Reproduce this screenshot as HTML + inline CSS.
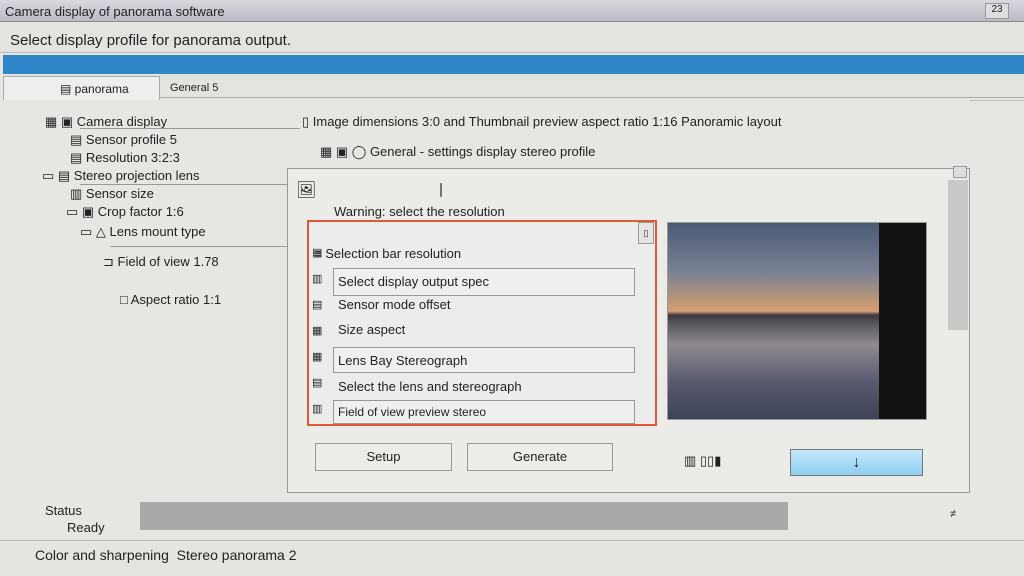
<!DOCTYPE html><html><head><style>
body{margin:0;width:1024px;height:576px;overflow:hidden;background:#e6e6e3;font-family:"Liberation Sans",sans-serif;position:relative;color:#222}
div{position:absolute;box-sizing:border-box}
.t{font-size:13px;white-space:nowrap}
.bx{border:1px solid #999}
</style></head><body>
<div style="left:0;top:0;width:1024px;height:22px;background:linear-gradient(#d8d9df,#b9bbc6);border-bottom:1px solid #888"></div>
<div class="t" style="left:5px;top:4px;font-size:13px">Camera display of panorama software</div>
<div class="bx" style="left:985px;top:3px;width:24px;height:16px;background:#ddd;font-size:10px;text-align:center">23</div>
<div style="left:0;top:23px;width:1024px;height:30px;background:#e4e3e0;border-bottom:1px solid #bbb"></div>
<div class="t" style="left:10px;top:32px;font-size:15px">Select display profile for panorama output.</div>
<div style="left:3px;top:55px;width:1021px;height:19px;background:#2f86c8"></div>
<div style="left:3px;top:74px;width:1021px;height:24px;background:#e3e3e0;border-bottom:1px solid #aaa"></div>
<div style="left:3px;top:76px;width:157px;height:24px;background:#eeeeec;border:1px solid #aaa;border-bottom:none"></div>
<div class="t" style="left:60px;top:82px;font-size:12px">▤ panorama</div>
<div class="t" style="left:170px;top:82px;font-size:11px">General 5</div>
<!-- left tree -->
<div class="t" style="left:45px;top:114px">▦ ▣ Camera display</div>
<div style="left:80px;top:128px;width:220px;border-top:1px solid #999"></div>
<div class="t" style="left:70px;top:132px">▤ Sensor profile 5</div>
<div class="t" style="left:70px;top:150px">▤ Resolution 3:2:3</div>
<div class="t" style="left:42px;top:168px">▭ ▤ Stereo projection lens</div>
<div style="left:80px;top:184px;width:210px;border-top:1px solid #999"></div>
<div class="t" style="left:70px;top:186px">▥ Sensor size</div>
<div class="t" style="left:66px;top:204px">▭ ▣ Crop factor 1:6</div>
<div class="t" style="left:80px;top:224px">▭ △ Lens mount type</div>
<div style="left:110px;top:246px;width:180px;border-top:1px solid #999"></div>
<div class="t" style="left:103px;top:254px">⊐ Field of view 1.78</div>
<div class="t" style="left:120px;top:292px">□ Aspect ratio 1:1</div>
<!-- right upper -->
<div class="t" style="left:302px;top:114px">▯ Image dimensions 3:0 and Thumbnail preview aspect ratio 1:16 Panoramic layout</div>
<div class="t" style="left:320px;top:144px">▦ ▣ ◯ General - settings display stereo profile</div>
<div style="left:970px;top:100px;width:54px;height:20px;border-top:1px solid #bbb"></div>
<!-- dialog -->
<div style="left:287px;top:168px;width:683px;height:325px;background:#ebebe8;border:1px solid #999"></div>
<div class="bx" style="left:953px;top:166px;width:14px;height:12px;background:#ddd"></div>
<div style="left:948px;top:180px;width:20px;height:150px;background:#c8c8c6"></div>
<div class="t" style="left:296px;top:180px;font-size:16px">🖼</div>
<div style="left:440px;top:183px;width:2px;height:14px;background:#777"></div>
<div class="t" style="left:334px;top:204px">Warning: select the resolution</div>
<div style="left:307px;top:220px;width:350px;height:206px;border:2px solid #e0583a;background:#ececea"></div>
<div class="bx" style="left:638px;top:222px;width:16px;height:22px;background:#e4e4e2;font-size:9px;text-align:center;line-height:20px">▯</div>
<div class="t" style="left:314px;top:246px">≡ Selection bar resolution</div>
<div class="bx" style="left:333px;top:268px;width:302px;height:28px;background:#efefed"></div>
<div class="t" style="left:338px;top:274px">Select display output spec</div>
<div class="t" style="left:338px;top:297px">Sensor mode offset</div>
<div class="t" style="left:338px;top:322px">Size aspect</div>
<div class="bx" style="left:333px;top:347px;width:302px;height:26px;background:#efefed"></div>
<div class="t" style="left:338px;top:353px">Lens Bay Stereograph</div>
<div class="t" style="left:338px;top:379px">Select the lens and stereograph</div>
<div class="bx" style="left:333px;top:400px;width:302px;height:24px;background:#efefed"></div>
<div class="t" style="left:338px;top:405px;font-size:12px">Field of view preview stereo</div>
<div style="left:312px;top:240px;width:14px;height:180px;font-size:11px;line-height:26px">▤<br>▥<br>▤<br>▦<br>▦<br>▤<br>▥</div>
<div style="left:667px;top:222px;width:260px;height:198px;background:#111;border:1px solid #999"></div>
<div style="left:668px;top:223px;width:211px;height:196px;background:linear-gradient(#4b5a74 0%,#7a8195 25%,#c79a72 42%,#d7a07a 45%,#3d3a3e 47%,#5c5a62 52%,#8f8a8e 62%,#5a5c70 80%,#3e4256 100%)"></div>
<div class="bx" style="left:315px;top:443px;width:137px;height:28px;background:#ecece9;text-align:center;line-height:26px;font-size:13px">Setup</div>
<div class="bx" style="left:467px;top:443px;width:146px;height:28px;background:#ecece9;text-align:center;line-height:26px;font-size:13px">Generate</div>
<div class="t" style="left:684px;top:453px">▥ ▯▯▮</div>
<div style="left:790px;top:449px;width:133px;height:27px;background:linear-gradient(#c5e6fa,#8ecff2);border:1px solid #777;text-align:center;font-size:16px;line-height:25px">↓</div>
<!-- bottom -->
<div class="t" style="left:45px;top:503px">Status</div>
<div class="t" style="left:67px;top:520px">Ready</div>
<div style="left:140px;top:502px;width:648px;height:28px;background:#a9a9a8"></div>
<div class="t" style="left:950px;top:508px;font-size:11px">≠</div>
<div style="left:0;top:540px;width:1024px;height:36px;background:#e4e4e1;border-top:1px solid #bbb"></div>
<div class="t" style="left:35px;top:547px;font-size:14px">Color and sharpening &nbsp;Stereo panorama 2</div>
</body></html>
